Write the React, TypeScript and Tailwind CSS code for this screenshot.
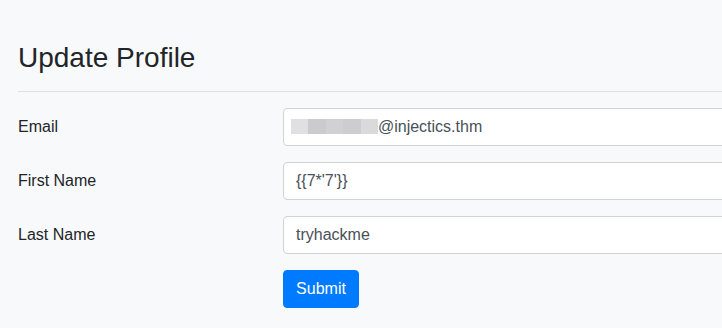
import React, { useState } from "react";

const blurBlocks = ["bg-[#e0e0e2]", "bg-[#cbcbcd]", "bg-[#d1d1d3]", "bg-[#cdcdcf]", "bg-[#dadadc]"];

const App = () => {
  const [profile, setProfile] = useState({
    firstName: "{{7*'7'}}",
    lastName: "tryhackme",
  });

  const handleChange = (e: React.ChangeEvent<HTMLInputElement>) => {
    setProfile({ ...profile, [e.target.name]: e.target.value });
  };

  return (
    <div className="min-h-screen w-[722px] h-[328px] overflow-hidden bg-[#f8f9fa] font-['Liberation_Sans',Arial,sans-serif] text-[#212529]">
      <div className="pl-[18px] pt-[41px] w-[900px]">
        <h3 className="text-[28px] leading-[1.2] font-normal mb-2">Update Profile</h3>
        <hr className="my-4 border-0 border-t border-[rgba(0,0,0,0.1)]" />

        <form onSubmit={(e) => e.preventDefault()} className="flex flex-col">
          {/* Email */}
          <div className="flex items-center mb-4">
            <label className="w-[265px] text-base leading-6">Email</label>
            <div className="w-[560px] h-[38px] bg-white border border-[#ced4da] rounded flex items-center pl-[7px] text-base text-[#495057]">
              <span className="flex h-[15px]">
                {blurBlocks.map((c, i) => (
                  <span key={i} className={`w-[17.4px] h-full ${c}`} />
                ))}
              </span>
              <span>@injectics.thm</span>
            </div>
          </div>

          {/* First Name */}
          <div className="flex items-center mb-4">
            <label className="w-[265px] text-base leading-6">First Name</label>
            <input
              type="text"
              name="firstName"
              value={profile.firstName}
              onChange={handleChange}
              className="w-[560px] h-[38px] bg-white border border-[#ced4da] rounded px-3 text-base text-[#495057] outline-none"
            />
          </div>

          {/* Last Name */}
          <div className="flex items-center mb-4">
            <label className="w-[265px] text-base leading-6">Last Name</label>
            <input
              type="text"
              name="lastName"
              value={profile.lastName}
              onChange={handleChange}
              className="w-[560px] h-[38px] bg-white border border-[#ced4da] rounded px-3 text-base text-[#495057] outline-none"
            />
          </div>

          {/* Submit */}
          <div className="flex">
            <div className="w-[265px]" />
            <button
              type="submit"
              className="w-[76px] h-[38px] bg-[#007bff] text-white text-base rounded border border-[#007bff]"
            >
              Submit
            </button>
          </div>
        </form>
      </div>
    </div>
  );
};

export default App;
